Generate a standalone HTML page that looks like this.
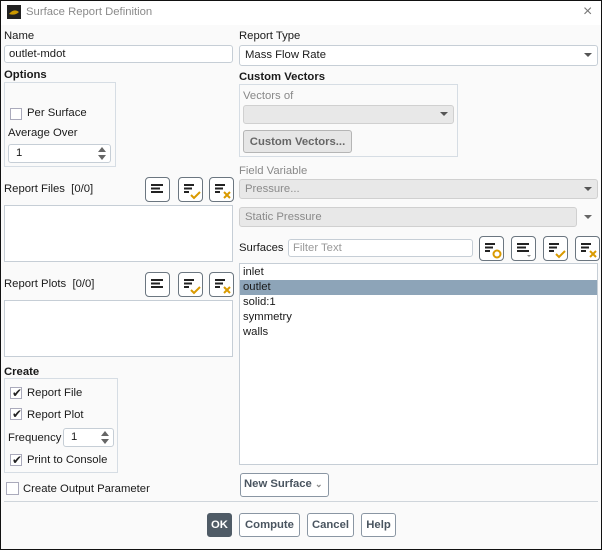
<!DOCTYPE html><html><head><style>
*{box-sizing:border-box;margin:0;padding:0}
body{width:602px;height:550px;position:relative;background:#fafafa;font-family:"Liberation Sans",sans-serif;font-size:11.3px;color:#1a1a1a;overflow:hidden}
.a{position:absolute;white-space:nowrap}
.b{font-weight:bold}
.g{color:#888}
.box{position:absolute;border:1px solid #d6dde4;background:#fafafa}
.in{position:absolute;border:1px solid #c6ced6;background:#fff;border-radius:3px;padding:2px 4px;line-height:13px}
.dd{position:absolute;border:1px solid #c6ced6;background:#fff;border-radius:3px;padding:3px 5px;line-height:13px}
.dis{background:#e8e8e8;border-color:#d0d0d0;color:#8a8a8a}
.arr{position:absolute;right:5px;top:7px;width:0;height:0;border-left:4px solid transparent;border-right:4px solid transparent;border-top:4px solid #555}
.btn{position:absolute;border:1px solid #8a96a3;border-radius:3px;background:#fff;font-weight:bold;color:#4a5560;text-align:center;line-height:22px}
.ib{position:absolute;width:25px;height:25px;border:1px solid #6b7680;border-radius:4px;background:#fff}
.cb{position:absolute;width:12px;height:12px;border:1px solid #aab;background:#fff}
.ck{position:absolute;font-size:12px;line-height:11px;left:1px;top:0;color:#222}
.list{position:absolute;border:1px solid #c6ced6;background:#fff}
.sp{position:absolute;right:4px;width:0;height:0;border-left:4px solid transparent;border-right:4px solid transparent}
</style></head><body>
<div style="position:absolute;left:0;top:0;width:602px;height:25px;background:#fff"></div>
<div style="position:absolute;left:0;top:0;width:602px;height:550px;border:1px solid #111;z-index:9;pointer-events:none"></div>
<svg class="a" style="left:7px;top:5px" width="14" height="14"><rect width="14" height="14" fill="#222"/><path d="M2 9 Q7 3 12 7 Q8 11 2 9Z" fill="#c90"/></svg>
<div class="a g" style="left:26px;top:6px;color:#8a8a8a">Surface Report Definition</div>
<div class="a" style="left:583px;top:3px;font-size:16px;color:#777">×</div>

<div class="a" style="left:4px;top:30px">Name</div>
<div class="in" style="left:4px;top:45px;width:229px;height:18px">outlet-mdot</div>
<div class="a" style="left:239px;top:30px">Report Type</div>
<div class="dd" style="left:239px;top:45px;width:359px;height:21px">Mass Flow Rate<div class="arr"></div></div>

<div class="a b" style="left:4px;top:69px">Options</div>
<div class="box" style="left:4px;top:82px;width:112px;height:85px"></div>
<div class="cb" style="left:10px;top:108px"></div>
<div class="a" style="left:27px;top:107px">Per Surface</div>
<div class="a" style="left:8px;top:127px">Average Over</div>
<div class="in" style="left:8px;top:144px;width:103px;height:19px;padding-left:7px">1<div class="sp" style="top:2px;border-bottom:5px solid #666"></div><div class="sp" style="top:10px;border-top:5px solid #666"></div></div>

<div class="a b" style="left:239px;top:71px">Custom Vectors</div>
<div class="box" style="left:239px;top:84px;width:219px;height:73px"></div>
<div class="a g" style="left:243px;top:90px">Vectors of</div>
<div class="dd dis" style="left:243px;top:105px;width:211px;height:19px"><div class="arr" style="top:6px"></div></div>
<div class="btn" style="left:243px;top:130px;width:109px;height:23px;background:#e6e6e6;border-color:#b5b5b5;color:#666">Custom Vectors...</div>

<div class="a g" style="left:239px;top:165px">Field Variable</div>
<div class="dd dis" style="left:239px;top:179px;width:359px;height:20px">Pressure...<div class="arr"></div></div>
<div class="dd dis" style="left:239px;top:207px;width:338px;height:20px">Static Pressure</div>
<div class="arr" style="left:584px;top:215px;right:auto;border-top-color:#666"></div>

<div class="a" style="left:4px;top:183px">Report Files&nbsp; [0/0]</div>
<div class="list" style="left:4px;top:205px;width:229px;height:57px"></div>
<div class="a" style="left:4px;top:278px">Report Plots&nbsp; [0/0]</div>
<div class="list" style="left:4px;top:300px;width:229px;height:57px"></div>

<svg width="0" height="0" style="position:absolute"><defs>
<g id="l"><path d="M5 7h12M5 10.5h9M5 14h12" stroke="#222" stroke-width="2"/></g>
<g id="s"><path d="M5 7h10M5 10.5h8M5 14h5" stroke="#222" stroke-width="2"/></g>
<g id="c"><path d="M12 17l3 3 6-6" stroke="#d99a00" stroke-width="2" fill="none"/></g>
<g id="x"><path d="M14 14l6 6M20 14l-6 6" stroke="#d99a00" stroke-width="2"/></g>
</defs></svg>
<svg class="ib" style="left:145px;top:177px"><use href="#l"/></svg>
<svg class="ib" style="left:178px;top:177px"><use href="#s"/><use href="#c"/></svg>
<svg class="ib" style="left:209px;top:177px"><use href="#s"/><use href="#x"/></svg>
<svg class="ib" style="left:145px;top:272px"><use href="#l"/></svg>
<svg class="ib" style="left:178px;top:272px"><use href="#s"/><use href="#c"/></svg>
<svg class="ib" style="left:209px;top:272px"><use href="#s"/><use href="#x"/></svg>

<div class="a" style="left:239px;top:242px">Surfaces</div>
<div class="in" style="left:288px;top:239px;width:185px;height:18px;color:#999">Filter Text</div>
<svg class="ib" style="left:479px;top:236px"><use href="#s"/><circle cx="17" cy="17" r="3.5" stroke="#d99a00" stroke-width="2" fill="none"/></svg>
<svg class="ib" style="left:511px;top:236px"><use href="#l"/><path d="M15 18h4l-2 2z" fill="#888"/></svg>
<svg class="ib" style="left:543px;top:236px"><use href="#s"/><use href="#c"/></svg>
<svg class="ib" style="left:575px;top:236px"><use href="#s"/><use href="#x"/></svg>

<div class="list" style="left:239px;top:263px;width:359px;height:202px"></div>
<div class="a" style="left:243px;top:266px">inlet</div>
<div class="a" style="left:240px;top:280px;width:357px;height:15px;background:#8da4b8;padding-left:3px;line-height:15px">outlet</div>
<div class="a" style="left:243px;top:296px">solid:1</div>
<div class="a" style="left:243px;top:311px">symmetry</div>
<div class="a" style="left:243px;top:326px">walls</div>

<div class="a b" style="left:4px;top:366px">Create</div>
<div class="box" style="left:4px;top:378px;width:114px;height:95px"></div>
<div class="cb" style="left:10px;top:387px"><span class="ck">✔</span></div>
<div class="a" style="left:27px;top:387px">Report File</div>
<div class="cb" style="left:10px;top:408px"><span class="ck">✔</span></div>
<div class="a" style="left:27px;top:409px">Report Plot</div>
<div class="a" style="left:8px;top:432px">Frequency</div>
<div class="in" style="left:63px;top:428px;width:51px;height:19px;padding-left:7px">1<div class="sp" style="top:2px;border-bottom:5px solid #666"></div><div class="sp" style="top:10px;border-top:5px solid #666"></div></div>
<div class="cb" style="left:10px;top:454px"><span class="ck">✔</span></div>
<div class="a" style="left:27px;top:454px">Print to Console</div>
<div class="cb" style="left:6px;top:482px;width:13px;height:13px"></div>
<div class="a" style="left:23px;top:483px">Create Output Parameter</div>

<div class="btn" style="left:240px;top:473px;width:89px;height:24px;line-height:21px;text-align:left;padding-left:3px">New Surface <span style="font-size:9px;color:#888">⌄</span></div>
<div class="a" style="left:4px;top:501px;width:594px;height:1px;background:#cfd5db"></div>

<div class="btn" style="left:207px;top:513px;width:25px;height:24px;background:#4f5b66;border-color:#4f5b66;color:#fff">OK</div>
<div class="btn" style="left:239px;top:513px;width:61px;height:24px">Compute</div>
<div class="btn" style="left:307px;top:513px;width:47px;height:24px">Cancel</div>
<div class="btn" style="left:361px;top:513px;width:35px;height:24px">Help</div>
</body></html>
